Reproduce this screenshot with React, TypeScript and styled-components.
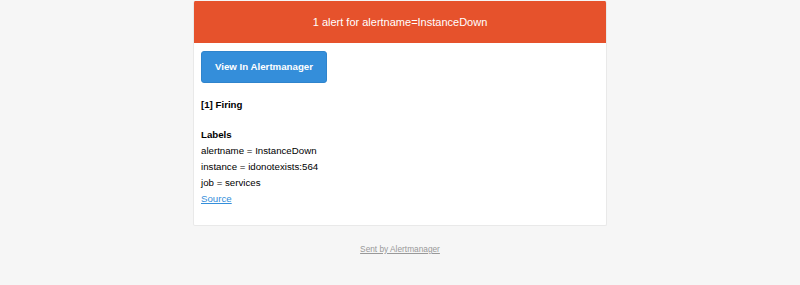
import React from "react";
import styled, { createGlobalStyle } from "styled-components";

const GlobalStyle = createGlobalStyle`
  html, body {
    margin: 0;
    padding: 0;
    background: #f6f6f6;
  }
  body {
    font-family: "Liberation Sans", Arial, sans-serif;
    font-size: 9.7px;
    line-height: 16px;
    color: #000;
  }
`;

const Page = styled.div`
  width: 100%;
  display: flex;
  flex-direction: column;
  align-items: center;
  padding-top: 1px;
`;

const Card = styled.div`
  width: 414px;
  box-sizing: border-box;
  background: #fff;
  border: 1px solid #e9e9e9;
  border-top: none;
  border-radius: 2px;
  overflow: hidden;
`;

const AlertHeader = styled.div`
  height: 42px;
  background: #e6522c;
  color: #fff;
  font-size: 11px;
  display: flex;
  align-items: center;
  justify-content: center;
`;

const Content = styled.div`
  display: flex;
  flex-direction: column;
  padding: 8px 7px 18px;
`;

const Block = styled.div`
  padding-bottom: ${(p: { $gap?: number }) => p.$gap ?? 14}px;
`;

const Button = styled.a`
  display: inline-flex;
  align-items: center;
  height: 32px;
  box-sizing: border-box;
  padding: 0 13px;
  background: #348eda;
  border: 1px solid #2f84cc;
  color: #fff;
  font-weight: bold;
  text-decoration: none;
  border-radius: 3px;
`;

const Label = styled.div`
  font-weight: bold;
`;

const Line = styled.div``;

const SourceLink = styled.a`
  color: #348eda;
  text-decoration: underline;
`;

const Footer = styled.div`
  padding-top: 15px;
  font-size: 8.3px;
  line-height: 16px;
  color: #999;
  text-align: center;
`;

const FooterLink = styled.a`
  color: #999;
  text-decoration: underline;
`;

const labels = [
  ["alertname", "InstanceDown"],
  ["instance", "idonotexists:564"],
  ["job", "services"],
];

export default function App() {
  return (
    <>
      <GlobalStyle />
      <Page>
        <Card>
          <AlertHeader>1 alert for alertname=InstanceDown</AlertHeader>
          <Content>
            <Block>
              <Button href="#">View In Alertmanager</Button>
            </Block>
            <Block>
              <Label>[1] Firing</Label>
            </Block>
            <Block $gap={0}>
              <Label>Labels</Label>
              {labels.map(([k, v]) => (
                <Line key={k}>
                  {k} = {v}
                </Line>
              ))}
              <Line>
                <SourceLink href="#">Source</SourceLink>
              </Line>
            </Block>
          </Content>
        </Card>
        <Footer>
          <FooterLink href="#">Sent by Alertmanager</FooterLink>
        </Footer>
      </Page>
    </>
  );
}
